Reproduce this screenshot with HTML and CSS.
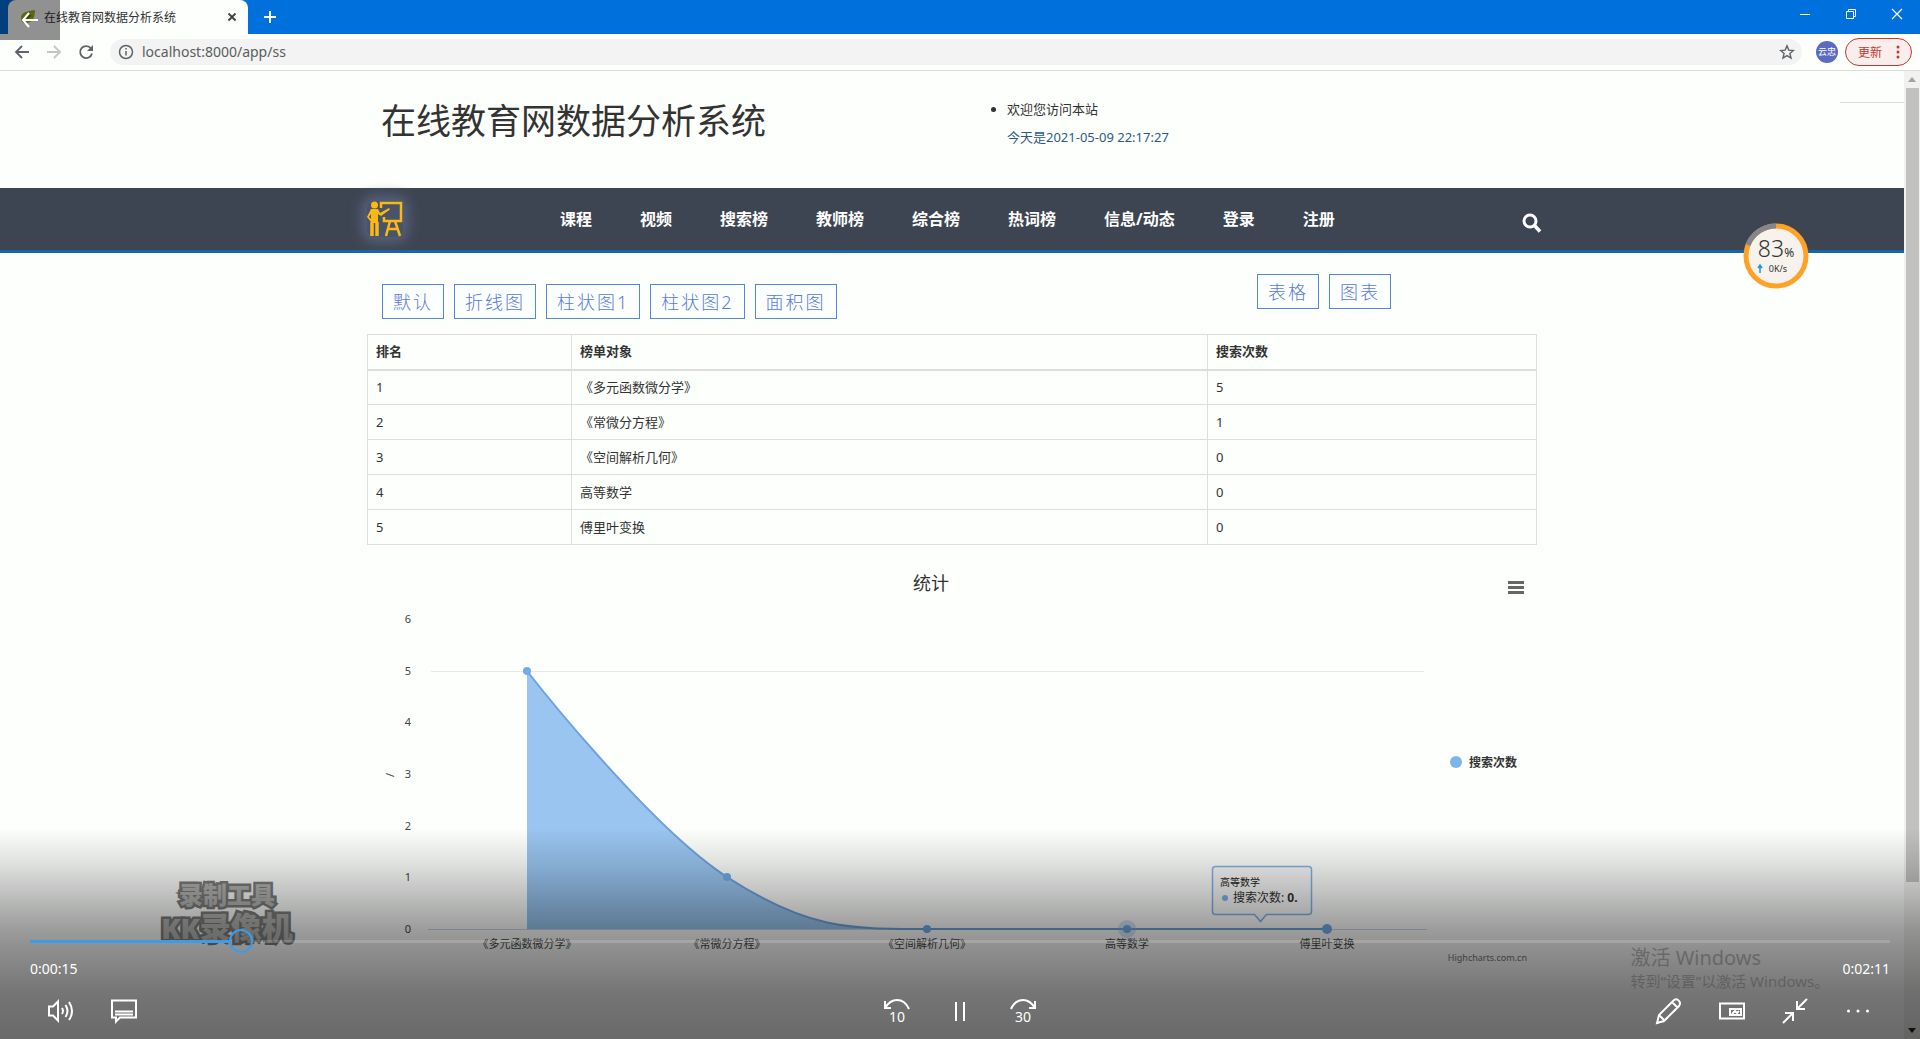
FILE: index.html
```html
<!DOCTYPE html>
<html lang="zh-CN">
<head>
<meta charset="utf-8">
<meta name="viewport" content="width=device-width, initial-scale=1">
<title>在线教育网数据分析系统</title>
<link rel="stylesheet" href="styles.css">
</head>
<body>
<div class="player">
  <div class="browser">
    <div class="tabstrip">
      <div class="tab">
        <svg class="favicon" width="16" height="16" viewBox="0 0 16 16"><path d="M1 9C1 4 6 2 15 1c0 8-3 13-9 13-3 0-5-2-5-5z" fill="#a3b51c"/><path d="M3 13l8-7" stroke="#667a10" stroke-width="2"/></svg>
        <span class="tab-title">在线教育网数据分析系统</span>
        <button class="plain" aria-label="关闭标签页"><svg width="10" height="10" viewBox="0 0 10 10"><path d="M1.500 1.500l7 7m0-7l-7 7" stroke="#3c4043" stroke-width="1.800"/></svg></button>
      </div>
      <button class="plain new-tab" aria-label="新标签页"><svg width="12" height="12" viewBox="0 0 12 12"><path d="M6 0v12M0 6h12" stroke="#fff" stroke-width="2"/></svg></button>
      <div class="window-controls">
        <button class="plain" aria-label="最小化"><svg width="12" height="12" viewBox="0 0 12 12"><path d="M1 6.500h10" stroke="#fff"/></svg></button>
        <button class="plain" aria-label="还原"><svg width="12" height="12" viewBox="0 0 12 12" fill="none" stroke="#fff"><path d="M1.500 3.500h7v7h-7zM3.500 3.500v-2h7v7h-2"/></svg></button>
        <button class="plain" aria-label="关闭"><svg width="12" height="12" viewBox="0 0 12 12"><path d="M1 1l10 10m0-10L1 11" stroke="#fff" stroke-width="1.200"/></svg></button>
      </div>
    </div>
    <div class="toolbar">
      <button class="plain" aria-label="后退"><svg width="16" height="16" viewBox="0 0 16 16" fill="none" stroke="#5f6368" stroke-width="1.800"><path d="M15 8H2M8 2L2 8l6 6"/></svg></button>
      <button class="plain" aria-label="前进"><svg width="16" height="16" viewBox="0 0 16 16" fill="none" stroke="#c3c5c7" stroke-width="1.800"><path d="M1 8h13M8 2l6 6-6 6"/></svg></button>
      <button class="plain" aria-label="刷新"><svg width="16" height="16" viewBox="0 0 16 16"><path d="M13 4.500A6 6 0 1 0 14 9.500" fill="none" stroke="#5f6368" stroke-width="1.800"/><path d="M15 1v6H9z" fill="#5f6368"/></svg></button>
      <div class="omnibox">
        <svg width="16" height="16" viewBox="0 0 16 16" fill="none" stroke="#5f6368" stroke-width="1.500"><circle cx="8" cy="8" r="6.500"/><path d="M8 7v4.500M8 4v1.500"/></svg>
        <input type="text" class="url" aria-label="地址" value="localhost:8000/app/ss">
        <button class="plain" aria-label="收藏"><svg width="16" height="16" viewBox="0 0 16 16"><path d="M8 1.800l1.800 4.300 4.600.4-3.500 3 1.100 4.600L8 11.600l-4 2.500 1.100-4.600-3.500-3 4.600-.4z" fill="none" stroke="#5f6368" stroke-width="1.400"/></svg></button>
      </div>
      <span class="avatar">云忠</span>
      <button class="update">更新<svg width="4" height="14" viewBox="0 0 4 14" fill="#c5372c"><circle cx="2" cy="2" r="1.500"/><circle cx="2" cy="7" r="1.500"/><circle cx="2" cy="12" r="1.500"/></svg></button>
    </div>
    <div class="viewport">
      <div class="page">
        <div class="container header">
          <h1>在线教育网数据分析系统</h1>
          <ul class="welcome">
            <li>欢迎您访问本站</li>
            <li class="today"><a href="#">今天是2021-05-09 22:17:27</a></li>
          </ul>
        </div>
        <nav class="navbar">
          <div class="container nav-inner">
            <a href="#" class="logo" aria-label="首页"><svg width="36" height="36" viewBox="0 0 36 36"><circle cx="7.500" cy="4" r="3.500" fill="#fdb813"/><path d="M4 8h7l2 4 9-5 1 1.500L14 15l-3-2v9h-7v-9l-2 3 3 3-1 2-4-5z" fill="#fdb813"/><path d="M5 21v14M10 21v14" stroke="#fdb813" stroke-width="3.500"/><path d="M14 7V2h20v18H17v-4" fill="none" stroke="#fdb813" stroke-width="2.500"/><path d="M23 20l-4 15M28 20l5 15M22 28h8" fill="none" stroke="#fdb813" stroke-width="2.500"/></svg></a>
            <div class="nav-links">
              <a href="#">课程</a><a href="#">视频</a><a href="#">搜索榜</a><a href="#">教师榜</a><a href="#">综合榜</a><a href="#">热词榜</a><a href="#">信息/动态</a><a href="#">登录</a><a href="#">注册</a>
            </div>
            <button class="plain search" aria-label="搜索"><svg width="20" height="20" viewBox="0 0 20 20" fill="none" stroke="#fff"><circle cx="8" cy="8" r="6" stroke-width="3"/><path d="M12.500 12.500l5.500 6" stroke-width="3.500"/></svg></button>
          </div>
        </nav>
        <main class="container">
          <div class="switches">
            <div class="group low">
              <button>默认</button><button>折线图</button><button>柱状图1</button><button>柱状图2</button><button>面积图</button>
            </div>
            <div class="group">
              <button>表格</button><button>图表</button>
            </div>
          </div>
          <table class="ranking">
            <thead><tr><th class="rank">排名</th><th class="subject">榜单对象</th><th>搜索次数</th></tr></thead>
            <tbody>
              <tr><td>1</td><td>《多元函数微分学》</td><td>5</td></tr>
              <tr><td>2</td><td>《常微分方程》</td><td>1</td></tr>
              <tr><td>3</td><td>《空间解析几何》</td><td>0</td></tr>
              <tr><td>4</td><td>高等数学</td><td>0</td></tr>
              <tr><td>5</td><td>傅里叶变换</td><td>0</td></tr>
            </tbody>
          </table>
          <svg class="chart" viewBox="0 0 1170 420" role="img" aria-label="统计">
            <text class="chart-title" x="564" y="30">统计</text>
            <path d="M1141 22.500h16M1141 27.500h16M1141 32.500h16" stroke="#666" stroke-width="3"/>
            <path class="grid" d="M64 111.500h993"/>
            <path d="M61 369.500h999" stroke="#ccd6eb"/>
            <g class="ylabels">
              <text x="41" y="63">6</text><text x="41" y="115">5</text><text x="41" y="166">4</text><text x="41" y="218">3</text><text x="41" y="270">2</text><text x="41" y="321">1</text><text x="41" y="373">0</text>
            </g>
            <text class="axis-title" transform="translate(27 217) rotate(270)">/</text>
            <path d="M160 111C160 111 280 265 360 317C440 369 480 369 560 369H960H160z" fill="#7cb5ec" fill-opacity=".78"/>
            <path d="M160 111C160 111 280 265 360 317C440 369 480 369 560 369H960" fill="none" stroke="#6fa3dc" stroke-width="2"/>
            <circle cx="760" cy="369" r="9" fill="#7cb5ec" fill-opacity=".3"/>
            <g fill="#6fadea"><circle cx="160" cy="111" r="4"/><circle cx="360" cy="317" r="4"/><circle cx="560" cy="369" r="4"/><circle cx="760" cy="369" r="4"/><circle cx="960" cy="369" r="5"/></g>
            <g class="xlabels">
              <text x="160" y="388">《多元函数微分学》</text><text x="360" y="388">《常微分方程》</text><text x="560" y="388">《空间解析几何》</text><text x="760" y="388">高等数学</text><text x="960" y="388">傅里叶变换</text>
            </g>
            <circle cx="1089" cy="202" r="6" fill="#7cb5ec"/>
            <text class="legend" x="1102" y="207">搜索次数</text>
            <path d="M848.500 306.500h93q3 0 3 3v42q0 3-3 3h-42l-6 7-6-7h-39q-3 0-3-3v-42q0-3 3-3z" fill="#f7f7f7" fill-opacity=".85" stroke="#7cb5ec" stroke-width="1.500"/>
            <text class="tip-head" x="853" y="326">高等数学</text>
            <circle cx="858" cy="338" r="3" fill="#7cb5ec"/>
            <text class="tip" x="866" y="342">搜索次数: <tspan font-weight="700">0.</tspan></text>
            <text class="credits" x="1160" y="401">Highcharts.com.cn</text>
          </svg>
        </main>
      </div>
      <div class="scrollbar">
        <svg width="8" height="17" viewBox="0 0 8 17"><path d="M0 11h8L4 6z" fill="#a3a3a3"/></svg>
        <div class="thumb"></div>
        <svg width="8" height="17" viewBox="0 0 8 17"><path d="M0 6h8l-4 5z" fill="#222"/></svg>
      </div>
    </div>
  </div>

  <div class="edge-line"></div>

  <div class="speed-ball">
    <svg width="66" height="66" viewBox="0 0 66 66"><circle cx="33" cy="33" r="30" fill="#f7f2ec" stroke="#ffa126" stroke-width="5"/><path d="M5 22A30 30 0 0 1 33 3" fill="none" stroke="#85868c" stroke-width="5"/><path d="M17 50v-8m-2 3l2-3 2 3" fill="none" stroke="#2196d8" stroke-width="1.500"/></svg>
    <span class="load">83<small>%</small></span>
    <span class="rate">0K/s</span>
  </div>

  <div class="recorder-mark"><span>录制工具</span><span class="big"><b>KK</b>录像机</span></div>

  <button class="back-overlay" aria-label="返回"><svg width="18" height="16" viewBox="0 0 18 16"><path d="M17 8H2M8 1L2 8l6 7" fill="none" stroke="#fff" stroke-width="2"/></svg></button>

  <div class="controls">
    <input type="range" class="seek" min="0" max="131" step="any" value="14.200" aria-label="播放进度">
    <div class="times"><span>0:00:15</span>
      <div class="activate"><p class="activate-title">激活 Windows</p><p>转到“设置”以激活 Windows。</p></div>
    <span>0:02:11</span></div>
    <div class="buttons">
      <div class="set">
        <button aria-label="音量"><svg width="28" height="28" viewBox="0 0 28 28"><path d="M2 9.500h4l5-5v19l-5-5H2z"/><path d="M15 11q2 3 0 6M18.500 8q4 6 0 12M22 5q6 9 0 18"/></svg></button>
        <button aria-label="字幕"><svg width="28" height="28" viewBox="0 0 28 28"><path d="M2 3.500h24v17H10l-4 4v-4H2z"/><path d="M5 14.500h18M5 17.500h18"/></svg></button>
      </div>
      <div class="set">
        <button aria-label="后退 10 秒"><svg width="30" height="28" viewBox="0 0 30 28"><path d="M3 4v7h6M3 11q5-8 12-8 8 0 12 9"/><text x="15" y="25">10</text></svg></button>
        <button aria-label="暂停"><svg width="28" height="28" viewBox="0 0 28 28"><path d="M10 5v19M18 5v19"/></svg></button>
        <button aria-label="前进 30 秒"><svg width="30" height="28" viewBox="0 0 30 28"><path d="M27 4v7h-6M27 11q-5-8-12-8-8 0-12 9"/><text x="15" y="25">30</text></svg></button>
      </div>
      <div class="set">
        <button aria-label="编辑"><svg width="28" height="28" viewBox="0 0 28 28"><path d="M2 26l2-8L19 3q3-2 5 1 2 2 0 5L9 24zM17 5l6 6M4 18l6 6"/></svg></button>
        <button aria-label="画中画"><svg width="28" height="28" viewBox="0 0 28 28"><path d="M2 6.500h24v15H2z"/><path d="M12 12h11v6H12zM14 17l3-3 2 2 2-2"/></svg></button>
        <button aria-label="退出全屏"><svg width="28" height="28" viewBox="0 0 28 28"><path d="M26 2L16 12M16 4v8h8M2 26l10-10M4 16h8v8"/></svg></button>
        <button aria-label="更多"><svg width="28" height="28" viewBox="0 0 28 28"><g fill="#fff" stroke="none"><circle cx="4.500" cy="14" r="1.500"/><circle cx="14" cy="14" r="1.500"/><circle cx="23.500" cy="14" r="1.500"/></g></svg></button>
      </div>
    </div>
  </div>
</div>
</body>
</html>
```
FILE: styles.css
```css
* { box-sizing: border-box; }
body {
  margin: 0;
  font-family: "Noto Sans", "Noto Sans CJK SC", sans-serif;
  font-size: 13px;
  color: #333;
  background: #fdfffd;
}
a { color: inherit; text-decoration: none; }
button { font: inherit; cursor: pointer; }
.plain { display: flex; padding: 0; border: 0; background: none; }

.player { position: relative; height: 100vh; overflow: hidden; }
.browser { display: flex; flex-direction: column; height: 100%; }

/* browser chrome */
.tabstrip { display: flex; align-items: center; height: 34px; padding-left: 8px; background: #0071dc; }
.tab {
  display: flex; align-items: center; gap: 8px;
  width: 240px; height: 34px; padding: 0 11px 0 12px;
  border-radius: 8px 8px 0 0; background: #fdfffd;
}
.tab-title { flex: 1; font-size: 12px; }
.new-tab { margin-left: 16px; }
.window-controls { display: flex; gap: 34px; margin-left: auto; padding: 0 17px 6px 0; }
.toolbar { display: flex; align-items: center; height: 37px; padding: 0 8px 0 14px; gap: 16px; border-bottom: 1px solid #dadcda; }
.omnibox { display: flex; flex: 1; align-items: center; gap: 8px; height: 26px; margin-right: -2px; padding: 0 7px 0 8px; border-radius: 13px; background: #f2f3f2; }
.url { flex: 1; padding: 0 0 2px; border: 0; outline: 0; background: none; color: #5a5d60; font-family: inherit; font-size: 14px; }
.avatar { width: 22px; height: 22px; border-radius: 50%; background: #5c6bc0; color: #fff; font-size: 9px; line-height: 22px; text-align: center; }
.update {
  display: flex; align-items: center; gap: 14px; height: 28px; margin-left: -9px; padding: 0 11px 0 12px;
  border: 1px solid #c5372c; border-radius: 14px; background: #f9eeec; color: #c5372c; font-size: 12px;
}

.viewport { display: flex; flex: 1; min-height: 0; }
.page { flex: 1; overflow: hidden; }
.scrollbar { display: flex; flex-direction: column; align-items: center; width: 16px; background: #f1f1f0; }
.scrollbar .thumb { width: 13px; height: 82%; margin-bottom: auto; background: #c1c1c0; }

/* site */
.container { width: 100%; max-width: 1170px; margin: 0 auto; }
.header { display: grid; grid-template-columns: 1fr 1fr; height: 117px; padding-left: 14px; }
h1 { margin: 25px 0 0; font-size: 35px; font-weight: 400; line-height: 50px; }
.welcome { margin: 24px 0 0; padding-left: 48px; line-height: 28px; }
.today { list-style: none; color: #2d5a80; }
.navbar { border-bottom: 3px solid #1765ab; background: #3e4552; }
.nav-inner { display: flex; align-items: center; height: 62px; }
.logo { display: flex; border-radius: 8px; background: #48546a; box-shadow: 0 0 12px 6px #55607a; }
.nav-links { display: flex; gap: 48px; margin-left: 157px; padding-bottom: 2px; color: #fff; font-size: 16px; font-weight: 700; }
.search { margin: 8px -5px 0 auto; }
.switches { display: flex; justify-content: space-between; height: 81px; padding: 21px 146px 0 15px; }
.group { display: flex; gap: 10px; }
.group.low { padding-top: 10px; }
.group button { height: 35px; padding: 0 10px; border: 1px solid #5588dc; background: #fbfffe; color: #5b78dc; font-size: 18px; font-weight: 300; line-height: 32px; letter-spacing: 2px; }

.ranking { width: 100%; border: 1px solid #ddd; border-collapse: collapse; table-layout: fixed; }
.ranking th, .ranking td { height: 35px; padding: 0 8px 1px; border: 1px solid #ddd; text-align: left; line-height: 20px; }
.ranking th { border-bottom-width: 2px; }
.rank { width: 204px; }
.subject { width: 636px; }

.chart { display: block; width: 100%; margin-top: 15px; font-size: 11px; }
.chart text { fill: #444; }
.chart .chart-title { font-size: 18px; text-anchor: middle; fill: #333; }
.chart .ylabels, .chart .xlabels { text-anchor: middle; }
.chart .grid { stroke: #e6e8e6; }
.chart .legend { font-size: 12px; font-weight: 700; fill: #333; }
.chart .tip-head { font-size: 10px; fill: #222; }
.chart .tip { font-size: 12px; fill: #333; }
.chart .credits { font-size: 9px; text-anchor: end; fill: #777; }

/* overlays on the recording */
.edge-line { position: absolute; top: 102px; right: 16px; width: 64px; height: 1px; background: #dcdedc; }
.speed-ball { position: absolute; top: 223px; right: 111px; width: 66px; height: 66px; }
.speed-ball svg { display: block; }
.load, .rate { position: absolute; left: 0; width: 100%; text-align: center; }
.load { top: 9px; font-size: 23px; font-weight: 300; line-height: 32px; }
.load small { font-size: 12px; font-weight: 400; }
.rate { top: 39px; padding-left: 4px; font-size: 9px; line-height: 14px; }
.recorder-mark {
  position: absolute; left: 160px; bottom: 94px; width: 134px;
  display: flex; flex-direction: column; align-items: center;
  color: #b4b5b3; font-size: 24px; font-weight: 900; line-height: 30px;
  -webkit-text-stroke: 5px #7c7d7b; paint-order: stroke fill;
}
.recorder-mark .big { font-size: 31px; line-height: 34px; white-space: nowrap; }
.recorder-mark b { font-size: 28px; font-weight: 900; }
.back-overlay { position: absolute; top: 0; left: 0; display: flex; align-items: center; justify-content: center; width: 60px; height: 40px; padding: 0; border: 0; background: rgba(0, 0, 0, .43); }
.controls {
  position: absolute; right: 0; bottom: 0; left: 0; padding: 101px 30px 0;
  background: linear-gradient(rgba(0, 0, 0, 0), rgba(0, 0, 0, .12) 17%, rgba(0, 0, 0, .38) 47%, rgba(0, 0, 0, .44) 57%, rgba(0, 0, 0, .54) 78%, rgba(0, 0, 0, .59));
  color: #fff;
}
.seek {
  display: block; width: 100%; height: 24px; margin: 0; appearance: none;
  background: linear-gradient(90deg, #3d9ce8 199px, transparent 199px, transparent 223px, rgba(255, 255, 255, .16) 223px) center / 100% 3px no-repeat;
}
.seek::-webkit-slider-thumb { appearance: none; width: 24px; height: 24px; border: 2px solid #3d9ce8; border-radius: 50%; background: transparent; }
.times { display: flex; height: 40px; font-size: 14px; line-height: 32px; }
.activate { margin-left: auto; margin-right: 18px; width: 194px; color: rgba(70, 70, 70, .5); font-size: 15px; line-height: 24px; white-space: nowrap; }
.activate p { margin: 0; }
.activate .activate-title { margin-top: -6px; font-size: 20px; line-height: 22px; }
.buttons { display: grid; grid-template-columns: 1fr auto 1fr; height: 46px; padding-top: 4px; }
.set { display: flex; align-items: flex-start; }
.set:first-child { margin-left: -1px; }
.set:last-child { justify-content: flex-end; margin-right: 1px; }
.set button { display: flex; justify-content: center; width: 63px; padding: 0; border: 0; background: none; }
.set svg { fill: none; stroke: #fff; stroke-width: 2; }
.set text { fill: #fff; stroke: none; font-size: 14px; text-anchor: middle; }
```
